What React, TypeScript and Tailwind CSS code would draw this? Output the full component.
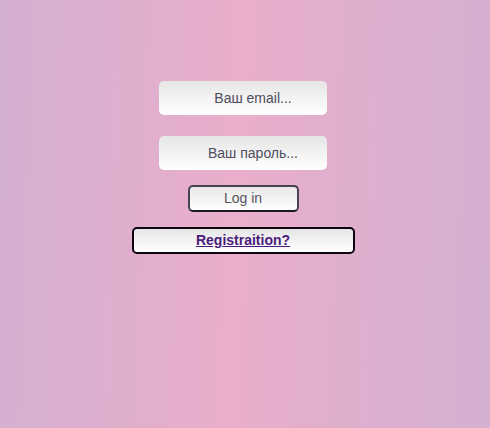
import React from 'react';

const App: React.FC = () => (
    <div className="min-h-[428px] w-full bg-[linear-gradient(92deg,#d4b0d1_0%,#e9aecb_48%,#d4b0d1_100%)] font-['Liberation_Sans',Arial,sans-serif]">
        <form className="flex flex-col items-center pt-[81px] pr-[4px]" onSubmit={e => e.preventDefault()}>
            <input
                type="email"
                placeholder="Ваш email..."
                className="w-[168px] h-[34px] rounded-[5px] bg-gradient-to-b from-[#e6e6e6] to-white pl-[20px] text-center text-[14px] text-[#4a4a5a] placeholder:text-[#4e4e60] outline-none"
            />
            <input
                type="password"
                placeholder="Ваш пароль..."
                className="mt-[21px] w-[168px] h-[34px] rounded-[5px] bg-gradient-to-b from-[#e6e6e6] to-white pl-[20px] text-center text-[14px] text-[#4a4a5a] placeholder:text-[#4e4e60] outline-none"
            />
            <button
                type="submit"
                className="mt-[15px] w-[111px] h-[27px] rounded-[5px] border-2 border-[#4a4156] border-b-[#1e1624] bg-gradient-to-b from-[#e8e8e8] to-white text-[14px] text-[#555560]"
            >
                Log in
            </button>
            <button
                type="button"
                className="mt-[15px] w-[223px] h-[27px] rounded-[5px] border-2 border-[#0c0510] bg-gradient-to-b from-[#e6e6e6] to-white text-[14px] font-bold text-[#4b1c7c] underline"
            >
                Registraition?
            </button>
        </form>
    </div>
);

export default App;
